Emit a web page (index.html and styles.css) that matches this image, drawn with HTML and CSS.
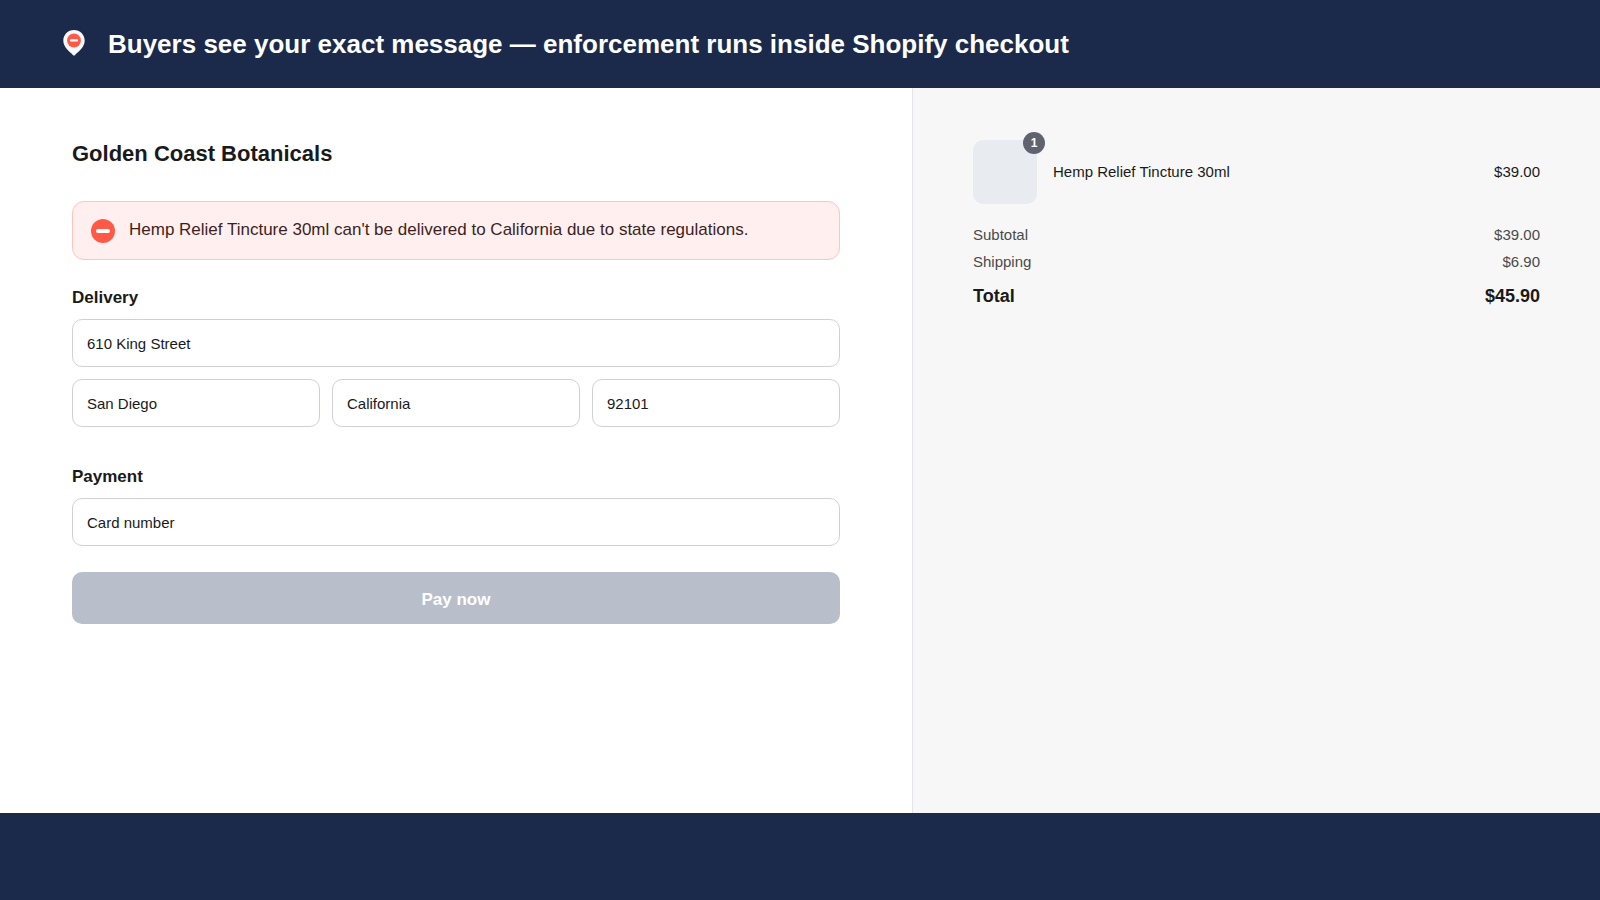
FILE: index.html
```html
<!DOCTYPE html>
<html lang="en">
<head>
<meta charset="utf-8">
<title>Checkout</title>
<link rel="stylesheet" href="styles.css">
</head>
<body>
<header class="banner">
  <svg class="banner-pin" viewBox="0 0 28 28" aria-hidden="true">
    <path d="M14 0C8 0 3.300 4.700 3.300 10.600C3.300 17.300 9.600 21.800 12.900 24.900Q14 25.900 15.100 24.900C18.400 21.800 24.700 17.300 24.700 10.600C24.700 4.700 20 0 14 0Z" fill="#f7f9fc"/>
    <circle cx="14" cy="10.500" r="6.900" fill="#ff5a47"/>
    <rect x="9.900" y="9.300" width="8.200" height="2.200" rx="1.100" fill="#fff"/>
  </svg>
  <h1 class="banner-title">Buyers see your exact message — enforcement runs inside Shopify checkout</h1>
</header>
<main class="checkout">
  <form class="details">
    <h2 class="store">Golden Coast Botanicals</h2>
    <div class="alert" role="alert">
      <svg class="alert-icon" viewBox="0 0 24 24" aria-hidden="true">
        <circle cx="12" cy="12" r="12" fill="#ff5a47"/>
        <rect x="5" y="10" width="14" height="4" rx="2" fill="#fff"/>
      </svg>
      <p class="alert-text">Hemp Relief Tincture 30ml can't be delivered to California due to state regulations.</p>
    </div>
    <section class="group">
      <h3 class="group-title">Delivery</h3>
      <input class="field" type="text" aria-label="Address" value="610 King Street">
      <div class="field-row">
        <input class="field" type="text" aria-label="City" value="San Diego">
        <input class="field" type="text" aria-label="State" value="California">
        <input class="field" type="text" aria-label="ZIP code" value="92101">
      </div>
    </section>
    <section class="group payment">
      <h3 class="group-title">Payment</h3>
      <input class="field" type="text" aria-label="Card number" placeholder="Card number">
    </section>
    <button class="pay" type="button" disabled>Pay now</button>
  </form>
  <aside class="summary">
    <div class="item">
      <div class="thumb"><span class="badge">1</span></div>
      <span class="item-name">Hemp Relief Tincture 30ml</span>
      <span>$39.00</span>
    </div>
    <dl class="totals">
      <div class="line"><dt>Subtotal</dt><dd>$39.00</dd></div>
      <div class="line"><dt>Shipping</dt><dd>$6.90</dd></div>
      <div class="line total"><dt>Total</dt><dd>$45.90</dd></div>
    </dl>
  </aside>
</main>
<footer class="base"></footer>
</body>
</html>
```
FILE: styles.css
```css
* {
  box-sizing: border-box;
}

body {
  margin: 0;
  min-height: 100vh;
  display: flex;
  flex-direction: column;
  background: #1b2a4a;
  color: #1a1a1a;
  font-family: "Helvetica Neue", Helvetica, "Liberation Sans", Arial, sans-serif;
  font-size: 15px;
  line-height: 18px;
}

h1, h2, h3, p, dl, dd {
  margin: 0;
}

.banner {
  display: flex;
  align-items: center;
  gap: 20px;
  height: 88px;
  padding: 0 60px;
}

.banner-pin {
  width: 28px;
  height: 28px;
}

.banner-title {
  color: #fff;
  font-size: 26px;
  line-height: 32px;
}

.checkout {
  flex: 1;
  display: grid;
  grid-template-columns: 57fr 43fr;
  background: #fff;
}

.details {
  padding: 52px 72px;
}

.store {
  margin-bottom: 34px;
  font-size: 22px;
  line-height: 27px;
}

.alert {
  display: flex;
  align-items: flex-start;
  gap: 14px;
  margin-bottom: 28px;
  padding: 16px 18px;
  border: 1px solid #ffc4bd;
  border-radius: 12px;
  background: #fff0ef;
  color: #3d1f1f;
}

.alert-icon {
  flex: none;
  width: 24px;
  height: 24px;
  margin-top: 1px;
}

.alert-text {
  font-size: 17px;
  line-height: 24px;
}

.group-title {
  margin-bottom: 11px;
  font-size: 17px;
  line-height: 20px;
}

.field {
  display: block;
  width: 100%;
  min-width: 0;
  height: 48px;
  padding: 0 14px;
  border: 1px solid #d0d0da;
  border-radius: 10px;
  background: #fff;
  color: #1a1a1a;
  font: inherit;
}

.field::placeholder {
  color: #1a1a1a;
  opacity: 1;
}

.field-row {
  display: grid;
  grid-template-columns: repeat(3, 1fr);
  gap: 12px;
  margin-top: 12px;
}

.payment {
  margin-top: 40px;
}

.pay {
  display: block;
  width: 100%;
  height: 52px;
  margin-top: 26px;
  padding: 3px 0 0;
  border: 0;
  border-radius: 10px;
  background: #b8bfca;
  color: #fff;
  font: bold 17px/20px "Helvetica Neue", Helvetica, "Liberation Sans", Arial, sans-serif;
}

.summary {
  padding: 52px 60px;
  border-left: 1px solid #e3e3e8;
  background: #f7f7f7;
}

.item {
  display: flex;
  align-items: center;
  gap: 16px;
  line-height: 20px;
}

.item-name {
  flex: 1;
}

.thumb {
  position: relative;
  width: 64px;
  height: 64px;
  border-radius: 10px;
  background: #e8ebf0;
}

.badge {
  position: absolute;
  top: -8px;
  right: -8px;
  width: 22px;
  height: 22px;
  border-radius: 50%;
  background: #5f6370;
  color: #fff;
  font-size: 12px;
  font-weight: bold;
  line-height: 22px;
  text-align: center;
}

.totals {
  margin-top: 22px;
}

.line {
  display: flex;
  justify-content: space-between;
  margin-bottom: 9px;
  color: #4a4a4a;
}

.total {
  margin-top: 14px;
  color: #1a1a1a;
  font-size: 18px;
  font-weight: bold;
  line-height: 22px;
}

.base {
  height: 87px;
}
```
